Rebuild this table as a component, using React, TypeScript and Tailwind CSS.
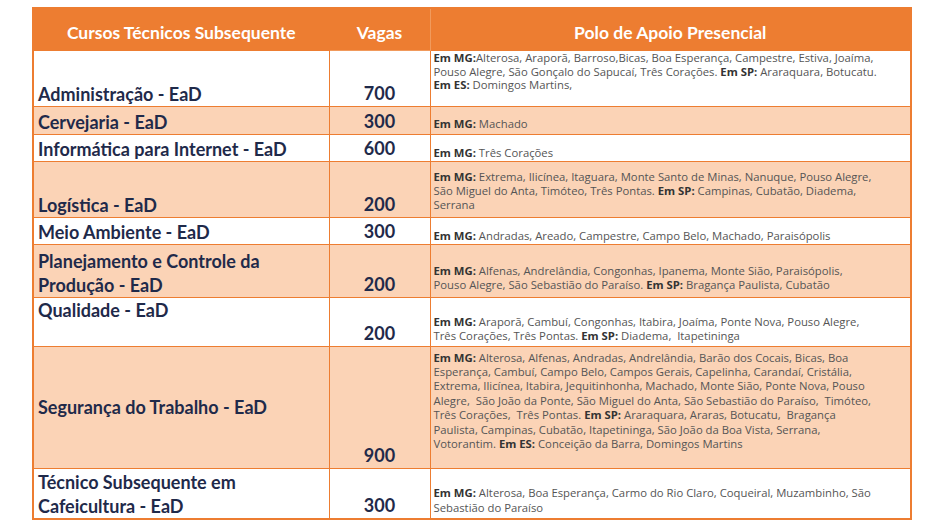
import React from "react"

type Seg = { b?: boolean; t: string }
type Row = {
  curso: string[]
  cursoCls: string
  vagas: string
  h: number
  shade: boolean
  poloCls: string
  polo: Seg[][]
}

const rows: Row[] = [
  {
    curso: ["Administração - EaD"],
    cursoCls: "align-bottom",
    vagas: "700",
    h: 56,
    shade: false,
    poloCls: "align-bottom pb-[14px] leading-[13.5px]",
    polo: [
      [{ b: true, t: "Em MG:" }, { t: "Alterosa, Araporã, Barroso,Bicas, Boa Esperança, Campestre, Estiva, Joaíma," }],
      [{ t: "Pouso Alegre, São Gonçalo do Sapucaí, Três Corações. " }, { b: true, t: "Em SP:" }, { t: " Araraquara, Botucatu." }],
      [{ b: true, t: "Em ES:" }, { t: " Domingos Martins," }],
    ],
  },
  {
    curso: ["Cervejaria - EaD"],
    cursoCls: "align-bottom",
    vagas: "300",
    h: 28,
    shade: true,
    poloCls: "align-bottom pb-[3px] leading-[13.5px]",
    polo: [[{ b: true, t: "Em MG:" }, { t: " Machado" }]],
  },
  {
    curso: ["Informática para Internet - EaD"],
    cursoCls: "align-bottom",
    vagas: "600",
    h: 27,
    shade: false,
    poloCls: "align-bottom pb-[1px] leading-[13.5px]",
    polo: [[{ b: true, t: "Em MG:" }, { t: " Três Corações" }]],
  },
  {
    curso: ["Logística - EaD"],
    cursoCls: "align-bottom",
    vagas: "200",
    h: 56,
    shade: true,
    poloCls: "align-bottom pb-[5px] leading-[14px]",
    polo: [
      [{ b: true, t: "Em MG:" }, { t: " Extrema, Ilicínea, Itaguara, Monte Santo de Minas, Nanuque, Pouso Alegre," }],
      [{ t: "São Miguel do Anta, Timóteo, Três Pontas. " }, { b: true, t: "Em SP:" }, { t: " Campinas, Cubatão, Diadema," }],
      [{ t: "Serrana" }],
    ],
  },
  {
    curso: ["Meio Ambiente - EaD"],
    cursoCls: "align-bottom",
    vagas: "300",
    h: 27,
    shade: false,
    poloCls: "align-bottom pb-[1px] leading-[13.5px]",
    polo: [[{ b: true, t: "Em MG:" }, { t: " Andradas, Areado, Campestre, Campo Belo, Machado, Paraisópolis" }]],
  },
  {
    curso: ["Planejamento e Controle da", "Produção - EaD"],
    cursoCls: "align-bottom",
    vagas: "200",
    h: 53,
    shade: true,
    poloCls: "align-bottom pb-[4px] leading-[14.5px]",
    polo: [
      [{ b: true, t: "Em MG:" }, { t: " Alfenas, Andrelândia, Congonhas, Ipanema, Monte Sião, Paraisópolis," }],
      [{ t: "Pouso Alegre, São Sebastião do Paraíso. " }, { b: true, t: "Em SP:" }, { t: " Bragança Paulista, Cubatão" }],
    ],
  },
  {
    curso: ["Qualidade - EaD"],
    cursoCls: "align-top",
    vagas: "200",
    h: 49,
    shade: false,
    poloCls: "align-bottom pb-[2px] leading-[14.5px]",
    polo: [
      [{ b: true, t: "Em MG:" }, { t: " Araporã, Cambuí, Congonhas, Itabira, Joaíma, Ponte Nova, Pouso Alegre," }],
      [{ t: "Três Corações, Três Pontas. " }, { b: true, t: "Em SP:" }, { t: " Diadema,  Itapetininga" }],
    ],
  },
  {
    curso: ["Segurança do Trabalho - EaD"],
    cursoCls: "align-middle",
    vagas: "900",
    h: 122,
    shade: true,
    poloCls: "align-bottom pb-[16px] leading-[14.4px]",
    polo: [
      [{ b: true, t: "Em MG:" }, { t: " Alterosa, Alfenas, Andradas, Andrelândia, Barão dos Cocais, Bicas, Boa" }],
      [{ t: "Esperança, Cambuí, Campo Belo, Campos Gerais, Capelinha, Carandaí, Cristália," }],
      [{ t: "Extrema, Ilicínea, Itabira, Jequitinhonha, Machado, Monte Sião, Ponte Nova, Pouso" }],
      [{ t: "Alegre,  São João da Ponte, São Miguel do Anta, São Sebastião do Paraíso,  Timóteo," }],
      [{ t: "Três Corações,  Três Pontas. " }, { b: true, t: "Em SP:" }, { t: " Araraquara, Araras, Botucatu,  Bragança" }],
      [{ t: "Paulista, Campinas, Cubatão, Itapetininga, São João da Boa Vista, Serrana," }],
      [{ t: "Votorantim. " }, { b: true, t: "Em ES:" }, { t: " Conceição da Barra, Domingos Martins" }],
    ],
  },
  {
    curso: ["Técnico Subsequente em", "Cafeicultura - EaD"],
    cursoCls: "align-bottom",
    vagas: "300",
    h: 51,
    shade: false,
    poloCls: "align-bottom pb-[3px] leading-[14.5px]",
    polo: [
      [{ b: true, t: "Em MG:" }, { t: " Alterosa, Boa Esperança, Carmo do Rio Claro, Coqueiral, Muzambinho, São" }],
      [{ t: "Sebastião do Paraíso" }],
    ],
  },
]

export default function App() {
  return (
    <div className="min-h-screen bg-white pt-[7px] pl-[32px] font-['Lato','Liberation_Sans',sans-serif]">
      <table className="w-[878px] table-fixed border-collapse border-2 border-[#ed7d31]">
        <colgroup>
          <col className="w-[296px]" />
          <col className="w-[101px]" />
          <col className="w-[481px]" />
        </colgroup>
        <thead>
          <tr className="h-[42px] bg-[#ed7d31] text-[17.5px] font-bold text-white">
            <th className="border border-[#ed7d31] pt-[7px] text-center align-middle">Cursos Técnicos Subsequente</th>
            <th className="border border-[#f19a5c] pt-[7px] text-center align-middle">Vagas</th>
            <th className="border border-[#ed7d31] pt-[7px] text-center align-middle">Polo de Apoio Presencial</th>
          </tr>
        </thead>
        <tbody>
          {rows.map((r) => (
            <tr
              key={r.curso.join(" ")}
              style={{ height: r.h }}
              className={r.shade ? "bg-[#fbd3b6]" : "bg-white"}
            >
              <td
                className={`border border-[#ed7d31] px-[4px] text-[18px] leading-[24px] font-bold text-[#1f2a4a] ${r.cursoCls}`}
              >
                {r.curso.map((c) => (
                  <div key={c} className="whitespace-nowrap">{c}</div>
                ))}
              </td>
              <td className="border border-[#ed7d31] pb-[1px] text-center align-bottom text-[18px] leading-[24px] font-bold text-[#1f2a4a]">
                {r.vagas}
              </td>
              <td
                className={`border border-[#ed7d31] px-[3px] font-['Open_Sans','Liberation_Sans',sans-serif] text-[11.3px] text-[#555555] ${r.poloCls}`}
              >
                {r.polo.map((line, i) => (
                  <div key={i} className="whitespace-pre">
                    {line.map((s, j) =>
                      s.b ? (
                        <span key={j} className="font-bold text-[#333333]">{s.t}</span>
                      ) : (
                        <span key={j}>{s.t}</span>
                      )
                    )}
                  </div>
                ))}
              </td>
            </tr>
          ))}
        </tbody>
      </table>
    </div>
  )
}
